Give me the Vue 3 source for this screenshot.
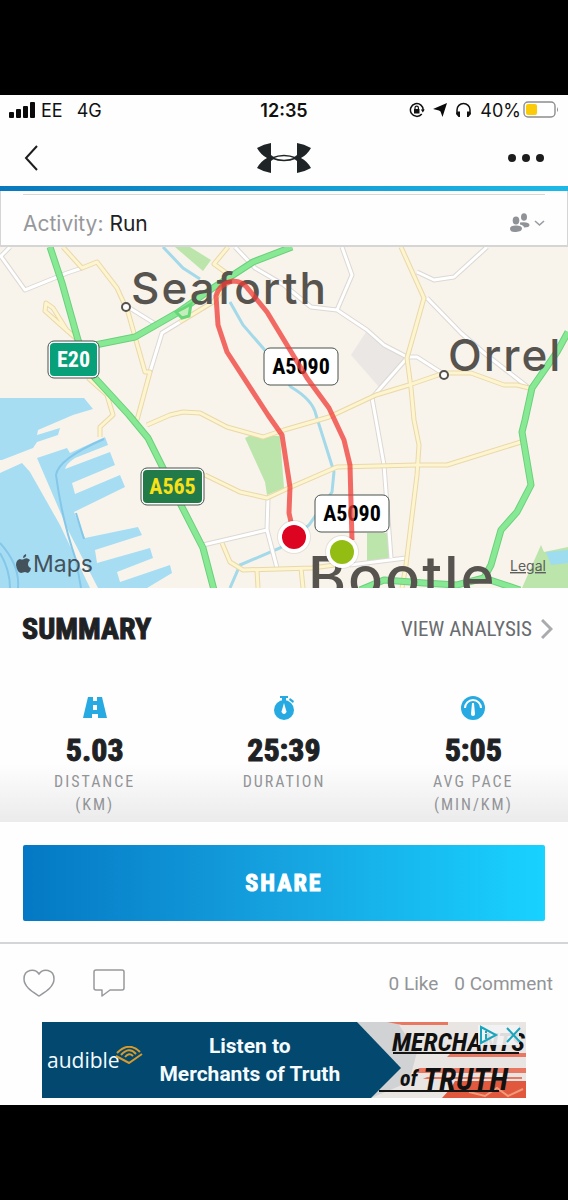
<template>
  <main class="screen">
    <div class="status">
      <div class="status-left">
        <svg width="26" height="16" viewBox="0 0 26 16" fill="#0a0a0a">
          <rect x="0" y="10" width="5" height="6" rx="1" />
          <rect x="7" y="7" width="5" height="9" rx="1" />
          <rect x="14" y="4" width="5" height="12" rx="1" />
          <rect x="21" y="0" width="5" height="16" rx="1" />
        </svg>
        <span>EE</span>
        <span class="network">4G</span>
      </div>
      <strong class="clock">12:35</strong>
      <div class="status-right">
        <svg width="16" height="16" viewBox="0 0 16 16" fill="none" stroke="#111" stroke-width="1.5">
          <path d="M12.8 12A6.4 6.4 0 1 1 14.2 8.500" />
          <path d="M11.800 7.500h4l-2 3z" fill="#111" stroke="none" />
          <rect x="5" y="7" width="5.500" height="4.500" fill="#111" stroke="none" />
          <path d="M6 7V5.800a1.700 1.700 0 0 1 3.400 0V7" stroke-width="1.200" />
        </svg>
        <svg width="14" height="14" viewBox="0 0 14 14" fill="#0a0a0a">
          <path d="M14 0 9.500 14 7.500 8.500 6 7.500 0 6z" />
        </svg>
        <svg width="17" height="16" viewBox="0 0 17 16">
          <path d="M2 12V8a6.500 6.500 0 0 1 13 0v4" fill="none" stroke="#111" stroke-width="1.500" />
          <path d="M2 9.500h3v5.500H3.500L1 12zM15 9.500h-3v5.500h1.500L16 12z" fill="#111" />
        </svg>
        <span class="percent">40%</span>
        <svg class="battery" width="36" height="18" viewBox="0 0 36 18">
          <rect x="1" y="1" width="31" height="15" rx="4" fill="#fff" stroke="#8d8d8f" stroke-width="1.400" />
          <rect x="3" y="3" width="11" height="11" rx="2" fill="#fbcb0a" />
          <path d="M34 6q2 3 0 5z" fill="#8d8d8f" />
        </svg>
      </div>
    </div>

    <header class="nav">
      <button class="icon-btn" aria-label="Back">
        <svg width="14" height="26" viewBox="0 0 14 26" fill="none" stroke="#1d1d1d" stroke-width="2">
          <path d="M13 1 2 13l11 12" />
        </svg>
      </button>
      <svg class="logo" width="54" height="30" viewBox="0 0 54 30" fill="#1f2426">
        <path d="M0 5Q7 1 14 0V12L18 15 14 18V30Q7 29 0 25 4 18 10 15 4 12 0 5Z" />
        <path d="M54 5Q47 1 40 0V12L36 15 40 18V30Q47 29 54 25 50 18 44 15 50 12 54 5Z" />
        <path d="M15 15Q27 10 39 15 27 20 15 15Z" fill="#fff" stroke="#1f2426" stroke-width="1.500" />
      </svg>
      <button class="icon-btn more" aria-label="More">
        <svg width="36" height="8" viewBox="0 0 36 8" fill="#1d1d1d">
          <circle cx="4" cy="4" r="4" />
          <circle cx="18" cy="4" r="4" />
          <circle cx="32" cy="4" r="4" />
        </svg>
      </button>
    </header>

    <section class="activity">
      <p><span class="muted">Activity:</span> Run</p>
      <button class="icon-btn" aria-label="Audience">
        <svg width="35" height="20" viewBox="0 0 35 20" fill="#8f9297">
          <ellipse cx="6" cy="7.500" rx="3.300" ry="4" />
          <ellipse cx="14" cy="4" rx="3" ry="3.800" />
          <path d="M0 15.500Q0 12.500 6 12.500T12 15.500 6 19 0 15.500Z" />
          <path d="M10 9.500q9-1 9.500 2.500 0 2.500-5.500 2.500 0-2-4-3z" />
          <path d="m25 8 4.500 4L34 8" fill="none" stroke="#999da1" stroke-width="1.600" />
        </svg>
      </button>
    </section>

    <svg class="map" viewBox="0 247 568 341" role="img" aria-label="Run route">
      <rect x="0" y="247" width="568" height="341" fill="#f8f4ec" />
      <g class="water">
        <path d="M0 398H84L93 409 73 415 38 430 37 435 60 428 58 435 37 442 33 448 2 460H0Z" />
        <path d="M0 473 22 463 30 472 60 525 90 588H0Z" />
        <path d="M37 458 67 448 70 453 105 437 108 445 75 458Q66 464 65 469L110 452 115 465 72 483 75 494 120 475 125 487 74 512 85 538 138 527 142 535 95 550 97 563 150 548 153 558 117 572 120 582 170 565 172 573 147 588H98L68 530Z" />
      </g>
      <path class="ferry" d="M104 439Q58 459 56 475 62 520 76 560L81 588M0 543Q20 565 18 588M0 553Q10 570 10 588M76 513 84 539" />
      <path d="M366 332 405 357 379 387 351 355Z" fill="#ebe7e4" />
      <g class="park">
        <path d="M175 247H190L211 260 203 271Z" />
        <path d="M245 438 251 435 280 436 284 488 267 495 265 482Z" />
        <path d="M367 533H389L391 559 367 561Z" />
        <path d="M522 588 541 545 544 552 568 547V588Z" />
      </g>
      <path d="M546 552 568 550V563L551 565Z" fill="#9edcf0" />
      <path class="river" d="M163 247 183 268 200 279M230 302 243 325 263 348 291 387Q313 400 316 415L334 472 332 492 309 525 280 548 240 565 230 588" />

      <polyline v-for="(r, i) in minorRoads" :key="'mc' + i" class="minor-case" :points="r" />
      <polyline v-for="(r, i) in minorRoads" :key="'m' + i" class="minor" :points="r" />
      <polyline v-for="(r, i) in mainRoads" :key="'yc' + i" class="main-case" :points="r" />
      <polyline v-for="(r, i) in mainRoads" :key="'y' + i" class="main" :points="r" />
      <polyline v-for="(r, i) in trunkRoads" :key="'tc' + i" class="trunk-case" :points="r" />
      <polyline v-for="(r, i) in trunkRoads" :key="'t' + i" class="trunk" :points="r" />
      <path d="M176 312 184 308 191 304 189 316 182 318Z" fill="#c5edb9" stroke="#67d77a" stroke-width="3" />

      <circle class="town" cx="126" cy="307" r="4" />
      <circle class="town" cx="444" cy="375" r="4" />
      <text class="place" x="131" y="304">Seaforth</text>
      <text class="place" x="448" y="371">Orrel</text>
      <text class="place big" x="308" y="598">Bootle</text>

      <g v-for="s in shields" :key="s.x" :class="['shield', s.kind]">
        <rect class="rim" :x="s.x" :y="s.y" :width="s.w" height="37" rx="6" />
        <rect class="plate" :x="s.x + 2" :y="s.y + 2" :width="s.w - 4" height="33" rx="4" />
        <text :x="s.x + s.w / 2" :y="s.y + 26">{{ s.label }}</text>
      </g>

      <path class="route" d="M291 522 289 513 290 487 282 435 268 415 227 352 218 325 216 296Q220 283 233 281 243 281 249 290L267 312 307 378 329 408 344 440 350 465 352 540" />
      <g v-for="m in markers" :key="m.color">
        <circle :cx="m.x" :cy="m.y" r="17" fill="#000" opacity="0.080" />
        <circle :cx="m.x" :cy="m.y" r="16" fill="#fff" />
        <circle :cx="m.x" :cy="m.y" r="12" :fill="m.color" />
      </g>

      <path d="M30 560Q27 557 24 559 22 560 20 559 16 560 16 565 17 572 21 573L25 572 28 573Q31 571 31 568 28 567 28 564 28 562 30 560ZM23 558Q23 555 26 554 27 557 23 558Z" fill="#44525c" />
      <text class="maps-name" x="33" y="572">Maps</text>
      <a href="#legal"><text class="legal" x="510" y="571">Legal</text></a>
    </svg>

    <section class="summary">
      <div class="summary-head">
        <h2>SUMMARY</h2>
        <a class="analysis" href="#analysis">
          VIEW ANALYSIS
          <svg width="12" height="20" viewBox="0 0 12 20" fill="none" stroke="#a9abad" stroke-width="3">
            <path d="m1 1 9 9-9 9" />
          </svg>
        </a>
      </div>
      <ul class="stats">
        <li v-for="s in stats" :key="s.label">
          <svg width="24" height="24" viewBox="0 0 24 24">
            <template v-if="s.icon === 'road'">
              <path d="M5 1H19L24 22H0Z" fill="#27aae1" />
              <path d="M10 1h4v4h-4zM10 9h4v5h-4zM9 18h6v4H9z" fill="#fff" />
            </template>
            <template v-else-if="s.icon === 'watch'">
              <circle cx="12" cy="14" r="10" fill="#27aae1" />
              <path d="M8 0h8v2h-2v3h-4V2H8zM18 2l4 3-1 2-4-3z" fill="#27aae1" />
              <path d="M12 7 14 14a2.500 2.500 0 1 1-4 0z" fill="#fff" />
            </template>
            <template v-else>
              <circle cx="12" cy="12" r="12" fill="#27aae1" />
              <path d="M4 12a8 8 0 0 1 16 0" fill="none" stroke="#fff" stroke-width="2" />
              <path d="M11 7h2l1 11a2 2 0 0 1-4 0z" fill="#fff" />
            </template>
          </svg>
          <strong>{{ s.value }}</strong>
          <span>{{ s.label }}</span>
          <span v-if="s.unit">{{ s.unit }}</span>
        </li>
      </ul>
    </section>

    <div class="share-wrap">
      <button class="share">SHARE</button>
    </div>

    <section class="social">
      <button class="icon-btn" aria-label="Like">
        <svg width="32" height="28" viewBox="0 0 32 28" fill="none" stroke="#96999c" stroke-width="1.500">
          <path d="M16 5C12-1 1 0 1 10c0 8 9 13 15 17 6-4 15-9 15-17C31 0 20-1 16 5Z" />
        </svg>
      </button>
      <button class="icon-btn comment" aria-label="Comment">
        <svg width="32" height="28" viewBox="0 0 32 28" fill="none" stroke="#96999c" stroke-width="1.500" stroke-linejoin="round">
          <path d="M3 1H29Q31 1 31 3V19Q31 21 29 21H17L9 27V21H3Q1 21 1 19V3Q1 1 3 1Z" />
        </svg>
      </button>
      <span class="likes">0 Like</span>
      <span>0 Comment</span>
    </section>

    <a class="ad" href="#ad">
      <span class="audible">
        audible
        <svg width="28" height="18" viewBox="0 0 28 18" fill="none" stroke="#d99b2b" stroke-width="2">
          <path d="m1 10 13 7 13-9" />
          <path d="M2 7Q14-5 25 6M6 9Q14 0 21 8M10 11Q14 6 18 10" />
        </svg>
      </span>
      <span class="pitch">Listen to<br />Merchants of Truth</span>
      <svg class="cover" width="169" height="76" viewBox="0 0 169 76">
        <rect width="169" height="76" fill="#e9e5e3" />
        <path d="M0 0H40L60 30 52 60 14 76H0Z" fill="#d0d2d3" />
        <path d="M30 0H91V3H45ZM94 31H169V35H90ZM62 46H169V51H56ZM70 55H165V57H66Z" fill="#e87862" />
        <path d="M98 59H169V76H85L94 66Z" fill="#e0593f" />
        <path d="M112 70 128 74 140 66 151 74 166 67" fill="none" stroke="#f19a79" stroke-width="2" />
        <path d="M36 30H162V32H36ZM22 68H142V70H22Z" fill="#151515" />
        <path d="M0 0 44 46 14 76H0Z" fill="#03486e" />
        <text class="cover-title" x="35" y="29">MERCHANTS</text>
        <text class="cover-of" x="43" y="64">of</text>
        <text class="cover-truth" x="66" y="68">TRUTH</text>
        <rect x="121" y="3" width="41" height="20" fill="#f3f3f3" opacity="0.900" />
        <path d="M124 5V21L139 13ZM129 12V17M129 9V11" fill="none" stroke="#19a5bd" stroke-width="2" />
        <path d="m150 6 13 14m0-14-13 14" stroke="#19a5bd" stroke-width="2" />
      </svg>
    </a>
  </main>
</template>

<script setup>
const minorRoads = [
  '0,255 25,290 67,273 82,268',
  '10,247 0,257',
  '128,307 157,325',
  '180,322 162,333 150,372',
  '235,247 255,268 284,285 311,307 337,310 367,330 384,345 407,357 417,357 442,373',
  '342,247 352,275 337,310',
  '417,272 434,280 454,277 487,247',
  '427,298 461,333 484,353 529,388',
  '407,358 377,392 372,398 376,420 384,465 391,558',
  '203,545 233,538 267,530 268,498',
  '267,530 277,568',
  '350,565 406,558',
]

const mainRoads = [
  '63,247 82,268 97,262 117,288 128,312 145,372 150,372 137,420',
  '78,340 62,326 45,311 46,303 53,308 68,332',
  '88,378 107,395 113,415 100,427 100,437',
  '147,425 170,415 183,412 200,413 227,427 263,437 284,430 329,417 376,395 409,385 444,373 471,373 504,385 517,385 529,388',
  '205,475 240,492 267,498 291,487 337,467 417,465 447,465 521,442',
  '401,247 424,298 407,358 411,388 414,420 419,445 417,475 406,565 402,588',
  '222,543 230,562 243,570 312,568 350,563',
  '257,570 258,588',
  '301,568 303,588',
  '228,247 214,264 232,277 213,302 180,322',
]

const trunkRoads = [
  '50,247 62,283 78,340 95,378 129,415 148,438 163,468 182,507 203,548 214,590',
  '95,345 135,337 177,313 213,288 233,275 253,262 292,247',
  '568,332 557,352 532,388 525,420 522,432 531,485 517,512 501,530 491,565 484,578',
  '360,590 384,580 424,583 457,585 484,578 520,590',
]

const shields = [
  { label: 'E20', x: 48, y: 341, w: 51, kind: 'euro' },
  { label: 'A565', x: 141, y: 468, w: 63, kind: 'primary' },
  { label: 'A5090', x: 264, y: 348, w: 74, kind: 'plain' },
  { label: 'A5090', x: 315, y: 495, w: 74, kind: 'plain' },
]

const markers = [
  { x: 294, y: 537, color: '#dc0420' },
  { x: 342, y: 552, color: '#94bd14' },
]

const stats = [
  { icon: 'road', value: '5.03', label: 'DISTANCE', unit: '(KM)' },
  { icon: 'watch', value: '25:39', label: 'DURATION' },
  { icon: 'pace', value: '5:05', label: 'AVG PACE', unit: '(MIN/KM)' },
]
</script>

<style>
body {
  margin: 0;
  background: #000;
}
</style>

<style scoped>
.screen {
  margin: 95px 0;
  background: #fefefe;
  color: #1f2224;
  font-family: Inter, "Liberation Sans", sans-serif;
}

.screen svg {
  display: block;
  flex: none;
}

p,
h2,
ul {
  margin: 0;
  padding: 0;
}

button {
  border: 0;
  background: none;
  padding: 0;
  font: inherit;
}

a {
  color: inherit;
  text-decoration: none;
}

.status {
  display: grid;
  grid-template-columns: 1fr auto 1fr;
  align-items: center;
  height: 30px;
  padding: 0 9px;
  font-size: 18px;
  color: #111;
}

.status-left,
.status-right {
  display: flex;
  align-items: center;
  gap: 6px;
}

.status-right {
  justify-content: flex-end;
  gap: 8px;
}

.network {
  margin-left: 8px;
}

.clock {
  font-weight: 600;
}

.battery {
  margin-left: -6px;
}

.nav {
  display: grid;
  grid-template-columns: 1fr auto 1fr;
  align-items: center;
  height: 66px;
  padding: 4px 24px 0;
  box-sizing: border-box;
  border-bottom: 5px solid;
  border-image: linear-gradient(90deg, #0879bd, #1cb9e8) 1;
}

.icon-btn {
  justify-self: start;
}

.more {
  justify-self: end;
}

.activity {
  display: flex;
  align-items: center;
  justify-content: space-between;
  height: 56px;
  padding: 10px 22px 0;
  box-sizing: border-box;
  border: solid #d5d5d5;
  border-width: 0 1px 2px;
  background: linear-gradient(#d9d7d0, #d9d7d0) center 3px / calc(100% - 44px) 1px no-repeat;
  font-size: 21px;
}

.muted {
  color: #96989b;
}

.map {
  width: 100%;
}

.water path {
  fill: #a6ddf3;
}

.park path {
  fill: #bce5ab;
}

.ferry {
  fill: none;
  stroke: #84c7e9;
  stroke-width: 2;
}

.river {
  fill: none;
  stroke: #a3d9e9;
  stroke-width: 3;
}

.minor-case,
.minor,
.main-case,
.main,
.trunk-case,
.trunk {
  fill: none;
  stroke-linejoin: round;
}

.minor-case {
  stroke: #dcd8d4;
  stroke-width: 5;
}

.minor {
  stroke: #fff;
  stroke-width: 3;
}

.main-case {
  stroke: #ead8a9;
  stroke-width: 5;
}

.main {
  stroke: #fdf5cf;
  stroke-width: 3;
}

.trunk-case {
  stroke: #6ccf7c;
  stroke-width: 7;
}

.trunk {
  stroke: #87e994;
  stroke-width: 5;
}

.town {
  fill: #fff;
  stroke: #55514c;
  stroke-width: 2;
}

.place {
  fill: #57534e;
  font-size: 44px;
  font-weight: 500;
  letter-spacing: 2px;
}

.place.big {
  font-size: 58px;
}

.shield text {
  font: bold 22px "Roboto Condensed", "Liberation Sans Narrow", Roboto, sans-serif;
  text-anchor: middle;
}

.rim {
  fill: #fff;
  stroke: #48524d;
}

.plain .plate {
  fill: #fff;
}

.euro .plate {
  fill: #08a078;
}

.primary .plate {
  fill: #237a49;
}

.euro text {
  fill: #fff;
}

.primary text {
  fill: #f9e118;
}

.route {
  fill: none;
  stroke: #f03b36;
  stroke-opacity: 0.75;
  stroke-width: 5;
  stroke-linejoin: round;
}

.maps-name {
  fill: #44525c;
  font-size: 23px;
}

.legal {
  fill: #5e5e5c;
  font-size: 14px;
  text-decoration: underline;
}

.summary {
  height: 234px;
  padding: 24px 0 0;
  box-sizing: border-box;
  background: linear-gradient(#fefefe 75%, #ebebec);
  font-family: "Liberation Sans Narrow", "Roboto Condensed", Roboto, sans-serif;
}

.summary-head {
  display: flex;
  align-items: center;
  justify-content: space-between;
  height: 34px;
  padding: 0 15px 0 22px;
}

h2 {
  font-size: 30px;
  line-height: 34px;
  -webkit-text-stroke: 1px;
}

.analysis {
  display: flex;
  align-items: center;
  gap: 9px;
  font-size: 21px;
  color: #696c70;
}

.stats {
  display: grid;
  grid-template-columns: repeat(3, 1fr);
  padding-top: 50px;
  list-style: none;
}

.stats li {
  display: flex;
  flex-direction: column;
  align-items: center;
  font-size: 16px;
  line-height: 23px;
  letter-spacing: 2px;
  color: #929497;
}

.stats strong {
  margin: 14px 0 4px;
  font-size: 32px;
  line-height: 32px;
  letter-spacing: 0;
  color: #1f2224;
  -webkit-text-stroke: 1px;
}

.share-wrap {
  padding: 23px 23px 21px;
  border-bottom: 2px solid #d4d5d6;
}

.share {
  display: block;
  width: 100%;
  height: 76px;
  border-radius: 2px;
  background: linear-gradient(90deg, #0478c4, #16a3e0 50%, #18d2ff);
  color: #fff;
  font: bold 24px "Liberation Sans Narrow", "Roboto Condensed", Roboto, sans-serif;
  letter-spacing: 2px;
  -webkit-text-stroke: 1px;
}

.social {
  display: flex;
  align-items: center;
  height: 78px;
  padding: 0 15px 0 23px;
  font-family: Roboto, "Liberation Sans", sans-serif;
  font-size: 19px;
  color: #929497;
}

.comment {
  margin-left: 38px;
}

.likes {
  margin: 0 16px 0 auto;
}

.ad {
  display: flex;
  align-items: center;
  height: 76px;
  margin: 0 42px;
  background: #03486e;
  color: #f4fbff;
  font-family: Roboto, "Liberation Sans", sans-serif;
}

.screen::after {
  content: "";
  display: block;
  height: 7px;
}

.audible {
  display: flex;
  padding-left: 5px;
  font-family: "Open Sans", sans-serif;
  font-size: 21px;
  font-weight: 500;
}

.audible svg {
  margin-left: -5px;
}

.pitch {
  flex: 1;
  text-align: center;
  font-size: 21px;
  line-height: 28px;
  font-weight: 700;
}

.cover text {
  font-family: "Liberation Sans Narrow", "Roboto Condensed", Roboto, sans-serif;
  font-weight: bold;
  font-style: italic;
  fill: #111;
}

.cover .cover-title {
  font-size: 26px;
}

.cover .cover-of {
  font-size: 22px;
}

.cover .cover-truth {
  font-size: 31px;
}
</style>
